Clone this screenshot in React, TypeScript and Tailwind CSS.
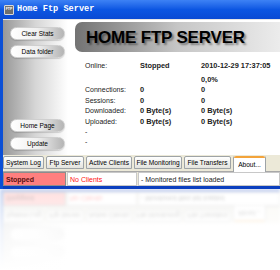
import React from "react";

const tabs = [
  { name: "System Log", w: "w-[41px]" },
  { name: "Ftp Server", w: "w-[38px]" },
  { name: "Active Clients", w: "w-[46px]" },
  { name: "File Monitoring", w: "w-[48px]" },
  { name: "File Transfers", w: "w-[47px]" },
];

const stats: [string, string, string][] = [
  ["Connections:", "0", "0"],
  ["Sessions:", "0", "0"],
  ["Downloaded:", "0 Byte(s)", "0 Byte(s)"],
  ["Uploaded:", "0 Byte(s)", "0 Byte(s)"],
  ["-", "", ""],
  ["-", "", ""],
];

function SideButton({ children }: { children?: string }) {
  return (
    <div className="flex h-[13px] w-[55px] items-center justify-center rounded-full border border-[#cfcfcf] bg-linear-to-r from-white via-[#f0f0f0] to-[#b4b4b4] text-[6.5px] text-black shadow-[0_1px_1px_rgba(0,0,0,0.15)]">
      {children}
    </div>
  );
}

// mirror: the faded copy under the window only needs the bottom strip's text
function Window({ mirror = false }: { mirror?: boolean }) {
  return (
    <div className="flex h-[189px] w-[280px] flex-col bg-[#0b4fd6]">
      {/* title bar */}
      <div className="flex h-[19px] items-center gap-[3px] bg-linear-to-b from-[#3d82f5] via-[#0c56e2] to-[#0a4ad4] pl-[4px]">
        <div className="flex h-[10px] w-[10px] items-center justify-center rounded-[1px] border border-[#d8d8d8] bg-[#6f6f6f] text-[3.5px] font-bold leading-none text-white">
          {!mirror && "FTP"}
        </div>
        <span className="font-['Liberation_Mono',monospace] text-[8.6px] font-bold text-white">
          {!mirror && "Home Ftp Server"}
        </span>
      </div>

      {/* client area */}
      <div className="ml-[3px] flex flex-1 flex-col bg-[#ece9d8]">
        <div className="flex h-[136px] border-t border-[#e6e6e6]">
          <div className="flex w-[65px] flex-col justify-between bg-linear-to-r from-[#989898] via-[#d6d6d6] to-white pb-[5px] pl-[7px] pt-[7px]">
            <div className="flex flex-col gap-[5px]">
              <SideButton>{mirror ? undefined : "Clear Stats"}</SideButton>
              <SideButton>{mirror ? undefined : "Data folder"}</SideButton>
            </div>
            <div className="flex flex-col gap-[5px]">
              <SideButton>{mirror ? undefined : "Home Page"}</SideButton>
              <SideButton>{mirror ? undefined : "Update"}</SideButton>
            </div>
          </div>

          <div className="flex flex-1 flex-col bg-white">
            <div className="ml-[7px] mt-[2px] flex h-[30px] items-center rounded-l-[7px] bg-linear-to-r from-[#737373] via-[#c6c6c6] to-[#ececec] pl-[11px]">
              {!mirror && (
                <span className="text-[17px] font-bold leading-none tracking-[-0.2px] text-black [text-shadow:2px_2px_2px_rgba(0,0,0,0.4)]">
                  HOME FTP SERVER
                </span>
              )}
            </div>

            {!mirror && (
              <div className="mt-[9px] grid grid-cols-[55px_61px_1fr] pl-[17px] text-[7px] leading-[10.4px] text-[#222]">
                <span className="mb-[3.6px]">Online:</span>
                <span className="mb-[3.6px] text-[7.4px] font-bold">Stopped</span>
                <span className="mb-[3.6px] text-[7.4px] font-bold">2010-12-29 17:37:05</span>
                <span />
                <span />
                <span className="text-[7.4px] font-bold">0,0%</span>
                {stats.map(([a, b, c], i) => (
                  <React.Fragment key={i}>
                    <span>{a}</span>
                    <span className="text-[7.4px] font-bold">{b}</span>
                    <span className="text-[7.4px] font-bold">{c}</span>
                  </React.Fragment>
                ))}
              </div>
            )}
          </div>
        </div>

        {/* tabs */}
        <div className="flex h-[17px] items-end gap-[2px] border-b border-[#a8a8a8] text-[6.6px] text-black">
          {tabs.map((t) => (
            <div
              key={t.name}
              className={`${t.w} mb-[2px] flex h-[13px] items-center justify-center rounded-t-[2px] border border-[#9ea3a6] bg-linear-to-b from-white to-[#e4e4de]`}
            >
              {t.name}
            </div>
          ))}
          <div className="-mb-px flex h-[16px] w-[33px] flex-col rounded-t-[2px] border-x border-[#9ea3a6] bg-white">
            <div className="h-[2px] rounded-t-[2px] bg-[#f3a33a]" />
            <div className="flex flex-1 items-center justify-center">About...</div>
          </div>
        </div>

        {/* status bar */}
        <div className="flex h-[14px] gap-[1px] text-[7px] leading-none">
          <div className="flex w-[63px] items-center border border-[#8c8c8c] bg-[#ff7f7f] pl-[2px] font-bold text-[#5a1010]">
            Stopped
          </div>
          <div className="flex w-[70px] items-center border border-[#c8c8c8] bg-white pl-[2px] text-[#ff1010]">
            No Clients
          </div>
          <div className="flex flex-1 items-center border border-[#c8c8c8] bg-white pl-[2px] text-[#222]">
            - Monitored files list loaded
          </div>
        </div>
        <div className="h-[3px] bg-[#0b3fbf]" />
      </div>
    </div>
  );
}

export default function App() {
  return (
    <div className="h-[270px] w-[280px] overflow-hidden bg-white font-['Liberation_Sans',Arial,sans-serif]">
      <Window />
      <div aria-hidden className="relative h-[81px] overflow-hidden">
        <div className="-scale-y-100 opacity-30 blur-[1.5px]">
          <Window mirror />
        </div>
        <div className="absolute inset-0 bg-linear-to-b from-white/20 via-white/75 to-white" />
      </div>
    </div>
  );
}
